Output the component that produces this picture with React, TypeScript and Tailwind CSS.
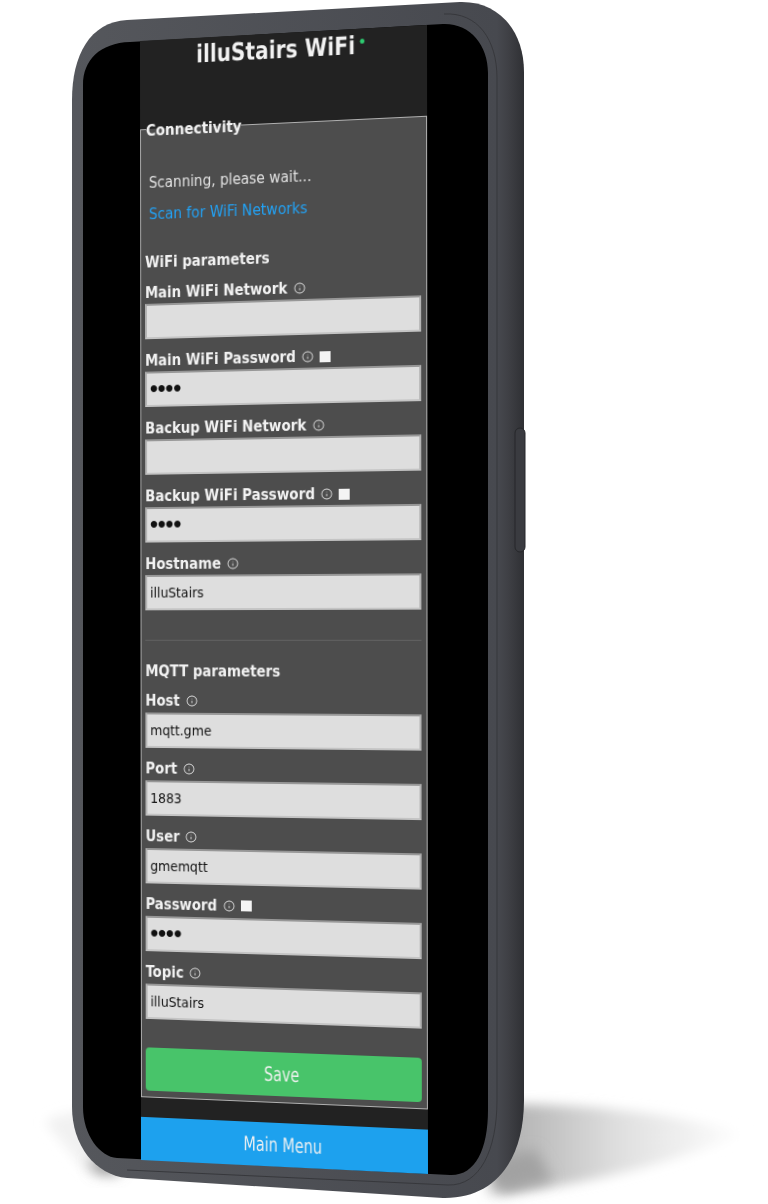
import { Info } from "lucide-react";

interface FieldProps {
  label: string;
  value?: string;
  secret?: boolean;
  wide?: boolean;
  className?: string;
}

const Field = ({ label, value = "", secret = false, wide = false, className = "mb-[13px]" }: FieldProps) => {
  return (
    <div className={className}>
      <label className={`flex items-center gap-[6px] text-[15.2px] leading-5 font-bold text-[#f2f2f2] ${wide ? "h-[21px] pb-[4px]" : "h-5 pb-[2px]"}`}>
        {label}
        <Info size={12} strokeWidth={1.7} className="text-[#e6e6e6]" />
        {secret && <input type="checkbox" className="h-[11px] w-[11px] appearance-none bg-[#f4f4f4]" />}
      </label>
      {secret ? (
        <input
          type="password"
          defaultValue="1234"
          readOnly
          className="block h-9 w-full border-2 border-t-[#979797] border-r-[#b5b5b5] border-b-[#c4c4c4] border-l-[#b5b5b5] bg-[#dedede] px-[3px] font-['Liberation_Sans',sans-serif] text-[23px] font-bold text-[#111111] outline-none"
        />
      ) : (
        <input
          type="text"
          defaultValue={value}
          readOnly
          className="block h-9 w-full border-2 border-t-[#979797] border-r-[#b5b5b5] border-b-[#c4c4c4] border-l-[#b5b5b5] bg-[#dedede] px-[3px] text-[14.2px] text-[#111111] outline-none"
        />
      )}
    </div>
  );
};

const Phone = () => {
  return (
    <svg width="768" height="1204" viewBox="0 0 768 1204" className="absolute top-0 left-0">
      <defs>
        <linearGradient id="body" x1="72" y1="0" x2="524" y2="0" gradientUnits="userSpaceOnUse">
          <stop offset="0" stopColor="#55575c" />
          <stop offset="0.94" stopColor="#47494f" />
          <stop offset="0.965" stopColor="#3f4045" />
          <stop offset="1" stopColor="#2f3034" />
        </linearGradient>
        <linearGradient id="shadowRight" x1="515" y1="0" x2="745" y2="0" gradientUnits="userSpaceOnUse">
          <stop offset="0" stopColor="#b4b4b4" />
          <stop offset="0.45" stopColor="#dfdfdf" />
          <stop offset="1" stopColor="#ffffff" />
        </linearGradient>
        <filter id="soft" x="-20%" y="-50%" width="140%" height="200%">
          <feGaussianBlur stdDeviation="6" />
        </filter>
        <filter id="softer" x="-60%" y="-100%" width="220%" height="300%">
          <feGaussianBlur stdDeviation="7" />
        </filter>
      </defs>
      <path d="M505 1104 C600 1104 690 1116 745 1134 C690 1155 610 1182 500 1194 Z" fill="url(#shadowRight)" filter="url(#soft)" />
      <path d="M490 1160 L535 1150 L552 1180 L490 1194 Z" fill="#a2a2a2" filter="url(#softer)" />
      <path d="M45 1122 C60 1112 90 1110 110 1114 L120 1174 L85 1170 Z" fill="#f1f1f1" filter="url(#soft)" />
      <path d="M88 1160 L120 1162 L118 1174 L96 1173 Z" fill="#8a8a8a" filter="url(#softer)" />
      <path
        d="M127 20 L460 2 C500 1 524 32 524 72 L524 1100 C524 1160 495 1199 443 1198 L127 1178 C95 1175 72 1145 72 1107 L72 100 C72 55 90 22 127 20 Z"
        fill="url(#body)"
      />
      <rect x="515" y="428" width="10" height="124" rx="5" fill="#3a3b40" stroke="#26272a" strokeWidth="1" />
      <path
        d="M497 78 C497 40 478 12 444 14 M497 78 L497 1100 C497 1150 480 1186 448 1185 L127 1170"
        fill="none"
        stroke="#37383c"
        strokeWidth="1"
      />
      <path
        d="M130 42 L443 24 C470 23 488 45 488 73 L488 1110 C488 1150 475 1176 450 1175 L117 1158 C100 1157 83 1135 83 1107 L83 85 C83 60 100 43 130 42 Z"
        fill="#000000"
      />
    </svg>
  );
};

export default function App() {
  return (
    <div className="relative h-[1204px] w-[768px] overflow-hidden bg-white font-['DejaVu_Sans_Condensed','DejaVu_Sans',sans-serif]">
      <Phone />
      <main className="absolute top-0 left-0 flex h-[1140px] w-[290px] origin-top-left flex-col overflow-hidden bg-[#222222] blur-[0.3px] [transform:matrix3d(0.95121,-0.05742,0,-0.00009003,0.000888,0.98167,0,0.0000000798,0,0,1,0,140,41,0,1)]">
        <header className="flex h-[78px] shrink-0 justify-center">
          <h1 className="relative mt-[2px] mr-[14px] h-fit scale-x-[0.91] text-[25px] leading-[30px] font-bold text-[#f2f2f2]">
            illuStairs WiFi
            <span className="absolute top-[8px] -right-[10px] h-[5px] w-[5px] rounded-full bg-[#2ecc71]" />
          </h1>
        </header>

        <fieldset className="h-[998px] shrink-0 border border-[#b0b0b0] bg-[#4d4d4d] pr-[5px] pl-[4px]">
          <legend className="ml-[1px] pt-1 text-[15.5px] leading-5 font-bold text-[#f2f2f2]">Connectivity</legend>
          <p className="mt-[33px] ml-[4px] text-[15.5px] leading-5 text-[#e2e2e2]">Scanning, please wait...</p>
          <a className="mt-3 ml-[4px] block text-[15.7px] leading-5 text-[#22a2f5]">Scan for WiFi Networks</a>
          <h2 className="mt-[29px] mb-3 text-[15.2px] leading-5 font-bold text-[#f2f2f2]">WiFi parameters</h2>

          <Field label="Main WiFi Network" />
          <Field label="Main WiFi Password" secret />
          <Field label="Backup WiFi Network" />
          <Field label="Backup WiFi Password" secret />
          <Field label="Hostname" value="illuStairs" className="mb-[30px]" />

          <hr className="border-[#626262]" />
          <h2 className="mt-[21px] mb-[11px] text-[15.2px] leading-5 font-bold text-[#f2f2f2]">MQTT parameters</h2>

          <Field label="Host" value="mqtt.gme" wide className="mb-[12px]" />
          <Field label="Port" value="1883" wide className="mb-[12px]" />
          <Field label="User" value="gmemqtt" wide className="mb-[12px]" />
          <Field label="Password" secret wide className="mb-[12px]" />
          <Field label="Topic" value="illuStairs" wide className="mb-[29px]" />

          <button className="h-11 w-full rounded-[4px] bg-[#48c46a] text-[#f2f2f2]">
            <span className="inline-block scale-x-[0.81] text-[20px]">Save</span>
          </button>
        </fieldset>

        <button className="mt-5 h-[44px] w-full shrink-0 bg-[#1da1ee] text-[#f2f2f2]">
          <span className="inline-block scale-x-[0.81] text-[20px]">Main Menu</span>
        </button>
      </main>
    </div>
  );
}
